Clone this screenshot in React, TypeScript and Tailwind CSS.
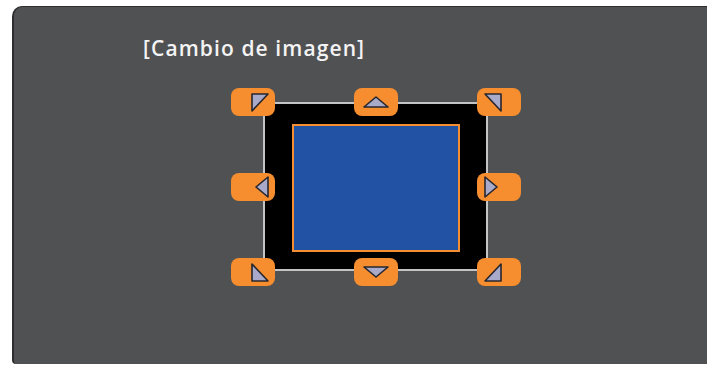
type Kind = "tl" | "t" | "tr" | "l" | "r" | "bl" | "b" | "br";

// triangle glyphs, each in its own little box
const shapes: Record<Kind, { pts: string; w: number; h: number; side: "left" | "right" | "center" }> = {
  tl: { pts: "2,2 18,2 2,19", w: 20, h: 21, side: "right" },
  t: { pts: "13,2 25,12 1,12", w: 26, h: 14, side: "center" },
  tr: { pts: "2,2 18,2 18,19", w: 20, h: 21, side: "left" },
  l: { pts: "14,1 14,21 2,11", w: 16, h: 22, side: "right" },
  r: { pts: "2,1 2,21 14,11", w: 16, h: 22, side: "left" },
  bl: { pts: "2,2 2,19 18,19", w: 20, h: 21, side: "right" },
  b: { pts: "1,2 25,2 13,12", w: 26, h: 14, side: "center" },
  br: { pts: "18,2 18,19 2,19", w: 20, h: 21, side: "left" },
};

function Handle({ kind }: { kind: Kind }) {
  const s = shapes[kind];
  const justify =
    s.side === "left" ? "justify-start pl-[6px]" : s.side === "right" ? "justify-end pr-[5px]" : "justify-center";
  return (
    <div className={`w-[44px] h-[28px] rounded-[8px] bg-[#f68d2e] flex items-center ${justify}`}>
      <svg width={s.w} height={s.h} viewBox={`0 0 ${s.w} ${s.h}`}>
        <polygon points={s.pts} fill="#a9a9c9" stroke="#26262e" strokeWidth="1.6" strokeLinejoin="round" />
      </svg>
    </div>
  );
}

export default function App() {
  return (
    <div className="w-[707px] h-[365px] bg-white overflow-hidden">
      <div className="ml-[12px] mt-[6px] h-[358px] bg-[#505153] rounded-tl-[10px] rounded-bl-[4px] border-l-2 border-t border-[#2e2e30]">
        <div
          className="pl-[129px] pt-[28px] text-[21px] leading-[27px] font-semibold tracking-[1.1px] text-[#f4f4f4]"
          style={{ fontFamily: '"Open Sans", sans-serif' }}
        >
          [Cambio de imagen]
        </div>
        <div className="relative ml-[249px] mt-[40px] w-[225px] h-[169px] bg-black border-2 border-[#c4c4c4]">
          <div className="ml-[27px] mt-[20px] w-[168px] h-[128px] bg-[#2252a4] border-2 border-[#f68d2e]" />
          <div className="absolute left-[-34px] top-[-16px] w-[290px] h-[198px] flex flex-col justify-between">
            <div className="flex justify-between">
              <Handle kind="tl" />
              <Handle kind="t" />
              <Handle kind="tr" />
            </div>
            <div className="flex justify-between">
              <Handle kind="l" />
              <Handle kind="r" />
            </div>
            <div className="flex justify-between">
              <Handle kind="bl" />
              <Handle kind="b" />
              <Handle kind="br" />
            </div>
          </div>
        </div>
      </div>
    </div>
  );
}
